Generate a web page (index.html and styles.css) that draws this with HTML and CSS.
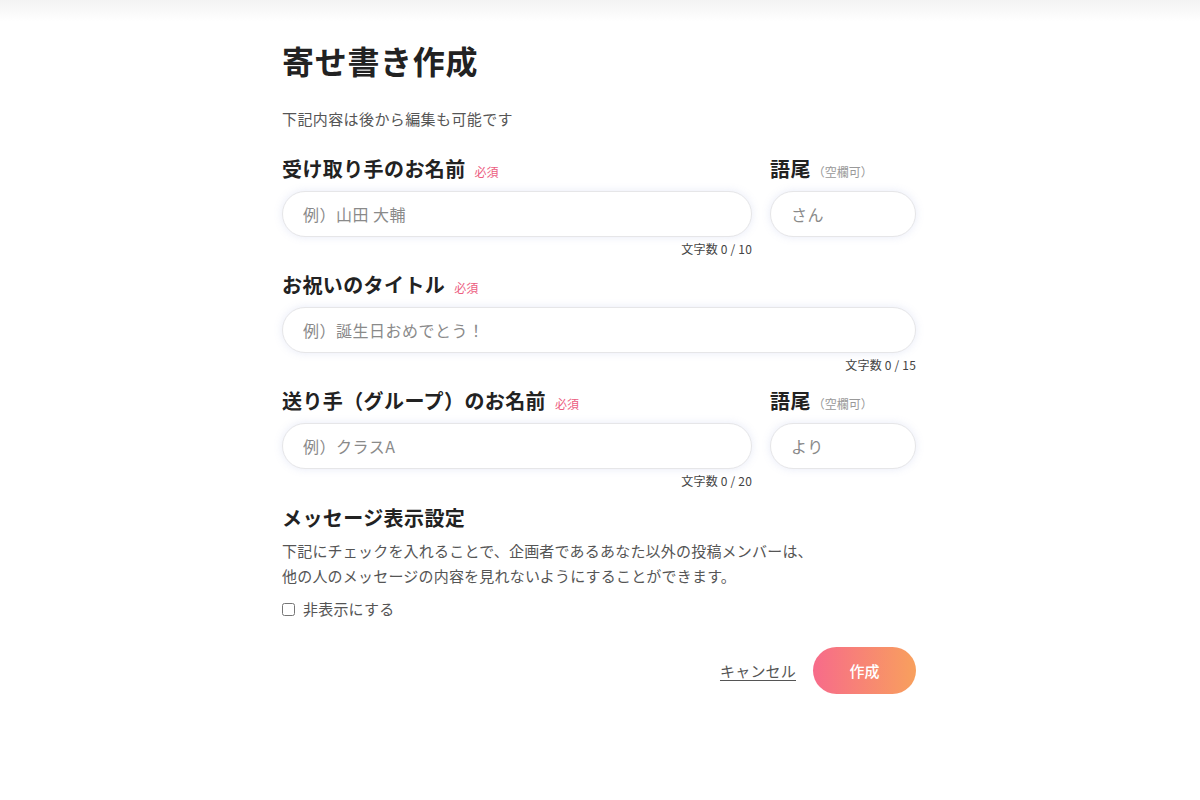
FILE: index.html
```html
<!DOCTYPE html>
<html lang="ja">
<head>
<meta charset="utf-8">
<title>寄せ書き作成</title>
<link rel="stylesheet" href="styles.css">
</head>
<body>
<div class="topbar"></div>
<main class="container">
  <h1 class="title">寄せ書き作成</h1>
  <p class="lead">下記内容は後から編集も可能です</p>

  <div class="row">
    <div class="field grow">
      <div class="label">受け取り手のお名前<span class="req">必須</span></div>
      <input class="input" type="text" placeholder="例）山田 大輔">
      <div class="count">文字数 0 / 10</div>
    </div>
    <div class="field suffix">
      <div class="label">語尾<span class="opt">（空欄可）</span></div>
      <input class="input" type="text" placeholder="さん">
    </div>
  </div>

  <div class="row">
    <div class="field grow">
      <div class="label">お祝いのタイトル<span class="req">必須</span></div>
      <input class="input" type="text" placeholder="例）誕生日おめでとう！">
      <div class="count">文字数 0 / 15</div>
    </div>
  </div>

  <div class="row">
    <div class="field grow">
      <div class="label">送り手（グループ）のお名前<span class="req">必須</span></div>
      <input class="input" type="text" placeholder="例）クラスA">
      <div class="count">文字数 0 / 20</div>
    </div>
    <div class="field suffix">
      <div class="label">語尾<span class="opt">（空欄可）</span></div>
      <input class="input" type="text" placeholder="より">
    </div>
  </div>

  <h2 class="section">メッセージ表示設定</h2>
  <p class="desc">下記にチェックを入れることで、企画者であるあなた以外の投稿メンバーは、<br>他の人のメッセージの内容を見れないようにすることができます。</p>
  <label class="check"><input type="checkbox" class="cb"><span>非表示にする</span></label>

  <div class="actions">
    <a class="cancel" href="#">キャンセル</a>
    <button class="create" type="button">作成</button>
  </div>
</main>
</body>
</html>
```
FILE: styles.css
```css
* { box-sizing: border-box; }
body {
  margin: 0;
  background: #fff;
  color: #222;
  font-family: "Noto Sans CJK JP", "Noto Sans", sans-serif;
}
.topbar {
  height: 22px;
  background: linear-gradient(#f3f3f3, #ffffff);
}
.container {
  width: 634px;
  margin: 0 auto;
  position: relative;
  left: -1px;
}
.title {
  margin: 16px 0 0;
  font-size: 32px;
  line-height: 45px;
  font-weight: 700;
  color: #222;
  letter-spacing: 0.7px;
}
.lead {
  margin: 25px 0 0;
  font-size: 15px;
  line-height: 22px;
  color: #555;
  letter-spacing: 0.4px;
}
.row {
  display: flex;
  gap: 18px;
  margin-top: 13px;
}
.lead + .row { margin-top: 25px; }
.field { display: flex; flex-direction: column; }
.grow { flex: 1; }
.suffix { width: 146px; }
.label {
  font-size: 20px;
  line-height: 27px;
  font-weight: 700;
  color: #222;
  letter-spacing: 0.4px;
  margin-bottom: 6px;
  display: flex;
  align-items: baseline;
}
.req {
  font-size: 12px;
  font-weight: 400;
  color: #ec5d7f;
  margin-left: 9px;
  letter-spacing: 0;
}
.opt {
  font-size: 12px;
  font-weight: 400;
  color: #999;
  margin-left: 2px;
  letter-spacing: 0;
}
.input {
  height: 46px;
  width: 100%;
  border: 1px solid #e6e6e8;
  border-radius: 23px;
  padding: 0 20px;
  font-family: inherit;
  font-size: 16px;
  letter-spacing: 0.5px;
  color: #333;
  background: #fff;
  box-shadow: 0 0 8px rgba(120, 140, 210, 0.18);
  outline: none;
}
.input::placeholder { color: #8a8a8a; }
.count {
  margin-top: 3px;
  font-size: 12px;
  line-height: 18px;
  color: #444;
  text-align: right;
  letter-spacing: 0.2px;
}
.section {
  margin: 14px 0 0;
  font-size: 20px;
  line-height: 27px;
  font-weight: 700;
  color: #222;
  letter-spacing: 0.4px;
}
.desc {
  margin: 7px 0 0;
  font-size: 15px;
  line-height: 25px;
  color: #555;
  letter-spacing: 0.2px;
}
.check {
  display: flex;
  align-items: center;
  gap: 8px;
  margin-top: 10px;
  font-size: 15px;
  line-height: 22px;
  color: #555;
  letter-spacing: 0.2px;
}
.cb {
  margin: 0;
  width: 13px;
  height: 13px;
}
.actions {
  display: flex;
  justify-content: flex-end;
  align-items: center;
  gap: 17px;
  margin-top: 27px;
}
.cancel {
  font-size: 15px;
  color: #555;
  letter-spacing: 0.2px;
  text-decoration: underline;
  text-underline-offset: 3px;
}
.create {
  width: 103px;
  height: 47px;
  border: none;
  border-radius: 24px;
  background: linear-gradient(90deg, #f76b8a, #f8a05d);
  color: #fff;
  font-family: inherit;
  font-size: 15px;
  font-weight: 500;
}
```
